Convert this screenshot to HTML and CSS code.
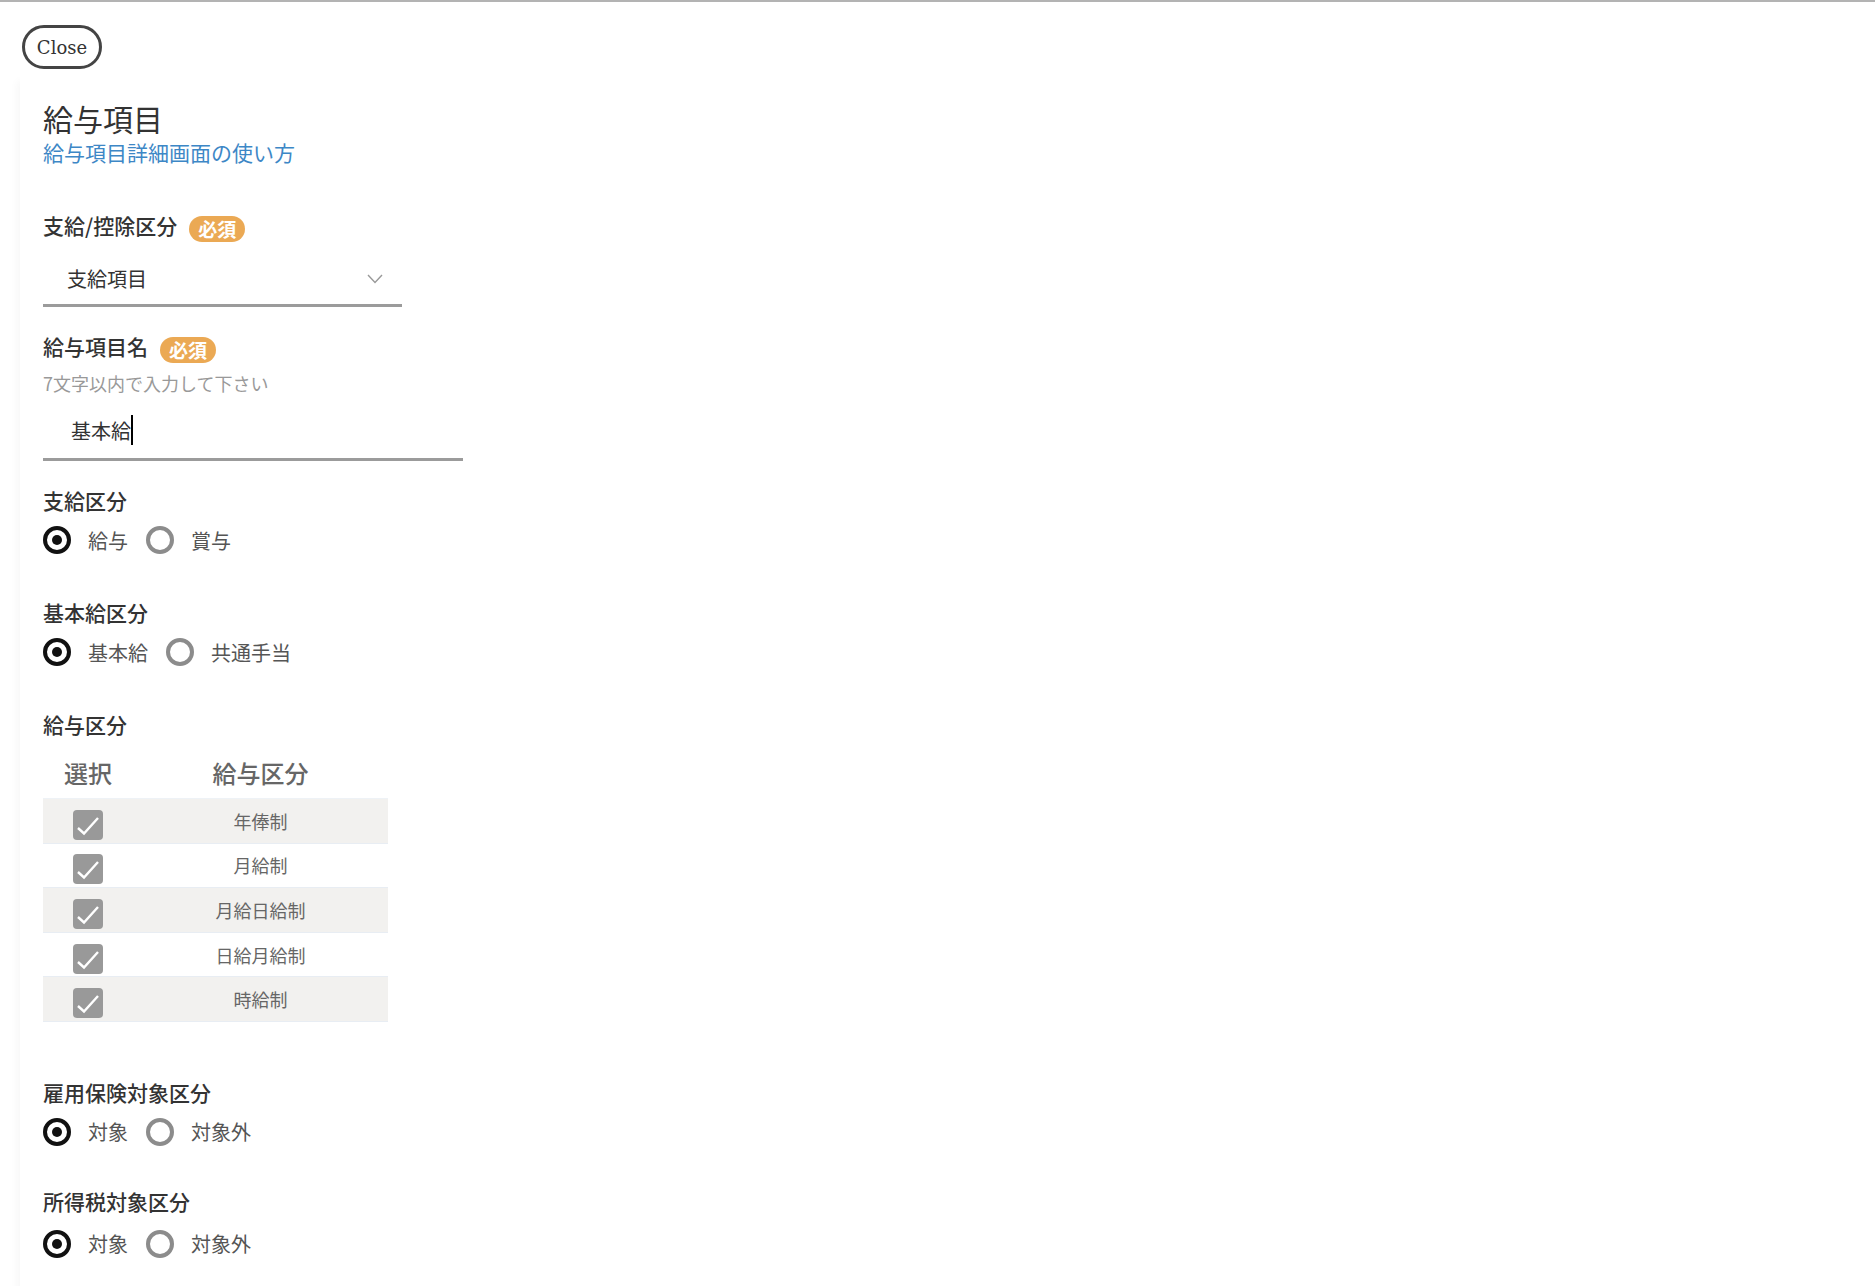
FILE: index.html
```
<!DOCTYPE html>
<html>

<head>
    <title>給与項目</title>
    <meta name="viewport" content="width=device-width, initial-scale=1.0">
    <link rel="stylesheet" href="styles.css">
</head>

<body>

    <button class="close-btn">Close</button>

    <div class="panel">
        <h1 class="title">給与項目</h1>
        <a class="help-link" href="#">給与項目詳細画面の使い方</a>

        <!-- 支給/控除区分 -->
        <div class="field first">
            <div class="label">支給/控除区分 <span class="badge">必須</span></div>
            <div class="select">
                <span>支給項目</span>
                <svg class="chevron" width="16" height="10" viewBox="0 0 16 10">
                    <path d="M1 1 L8 8.5 L15 1" fill="none" stroke="#999" stroke-width="1.4" />
                </svg>
            </div>
        </div>

        <!-- 給与項目名 -->
        <div class="field">
            <div class="label">給与項目名 <span class="badge">必須</span></div>
            <div class="hint">7文字以内で入力して下さい</div>
            <div class="text-input">基本給<span class="caret"></span></div>
        </div>

        <!-- 支給区分 -->
        <div class="field">
            <div class="label">支給区分</div>
            <div class="radios">
                <span class="radio checked"></span><span class="radio-label">給与</span>
                <span class="radio"></span><span class="radio-label">賞与</span>
            </div>
        </div>

        <!-- 基本給区分 -->
        <div class="field gap">
            <div class="label">基本給区分</div>
            <div class="radios">
                <span class="radio checked"></span><span class="radio-label">基本給</span>
                <span class="radio"></span><span class="radio-label">共通手当</span>
            </div>
        </div>

        <!-- 給与区分 -->
        <div class="field gap">
            <div class="label">給与区分</div>
            <div class="pay-table">
                <div class="head">
                    <div class="col-check">選択</div>
                    <div class="col-name">給与区分</div>
                </div>
                <div class="row">
                    <div class="col-check"><span class="checkbox"></span></div>
                    <div class="col-name">年俸制</div>
                </div>
                <div class="row">
                    <div class="col-check"><span class="checkbox"></span></div>
                    <div class="col-name">月給制</div>
                </div>
                <div class="row">
                    <div class="col-check"><span class="checkbox"></span></div>
                    <div class="col-name">月給日給制</div>
                </div>
                <div class="row">
                    <div class="col-check"><span class="checkbox"></span></div>
                    <div class="col-name">日給月給制</div>
                </div>
                <div class="row">
                    <div class="col-check"><span class="checkbox"></span></div>
                    <div class="col-name">時給制</div>
                </div>
            </div>
        </div>

        <!-- 雇用保険対象区分 -->
        <div class="field after-table">
            <div class="label">雇用保険対象区分</div>
            <div class="radios">
                <span class="radio checked"></span><span class="radio-label">対象</span>
                <span class="radio"></span><span class="radio-label">対象外</span>
            </div>
        </div>

        <!-- 所得税対象区分 -->
        <div class="field gap last">
            <div class="label">所得税対象区分</div>
            <div class="radios">
                <span class="radio checked"></span><span class="radio-label">対象</span>
                <span class="radio"></span><span class="radio-label">対象外</span>
            </div>
        </div>
    </div>

</body>

</html>
```

FILE: styles.css
```
body {
    margin: 0;
    border-top: 2px solid #b3b3b3;
    font-family: "DejaVu Serif", "Noto Sans CJK JP", serif;
    color: #333;
    background: white;
    height: 1284px;
    overflow: hidden;
}

.close-btn {
    display: block;
    margin: 23px 0 0 22px;
    width: 80px;
    height: 44px;
    border: 3px solid #444;
    border-radius: 22px;
    background: white;
    font-family: "DejaVu Serif", serif;
    font-size: 18px;
    color: #333;
    padding: 0;
}

.panel {
    margin: 4px 0 0 20px;
    padding: 27px 23px 60px;
    box-shadow: -5px 6px 8px -2px rgba(0, 0, 0, 0.035);
    font-family: "Noto Sans CJK JP", sans-serif;
}

.title {
    margin: 0;
    font-size: 30px;
    line-height: 36px;
    font-weight: normal;
    color: #333;
}

.help-link {
    display: block;
    margin-top: 2px;
    font-size: 21px;
    line-height: 28px;
    color: #3d87c6;
    text-decoration: none;
}

.field {
    margin-top: 25px;
}

.field.first {
    margin-top: 45px;
}

.field.gap {
    margin-top: 44px;
}

.field.after-table {
    margin-top: 56px;
}

.field.last {
    margin-top: 41px;
}

.field.last .radios {
    margin-top: 15px;
}

.label {
    display: flex;
    align-items: center;
    height: 28px;
    font-size: 21px;
    line-height: 28px;
    font-weight: 500;
    color: #333;
}

.badge {
    margin: 8px 0 0 12px;
    padding: 0 9px;
    height: 26px;
    line-height: 26px;
    border-radius: 13px;
    background: #eba954;
    color: white;
    font-size: 19px;
    font-weight: bold;
}

.select {
    margin-top: 14px;
    width: 359px;
    height: 54px;
    box-sizing: border-box;
    border-bottom: 3px solid #9b9b9b;
    padding: 0 19px 0 24px;
    display: flex;
    align-items: center;
    justify-content: space-between;
    font-size: 20px;
    color: #333;
}

.hint {
    margin-top: 11px;
    font-size: 18px;
    line-height: 24px;
    color: #999;
}

.text-input {
    margin-top: 3px;
    width: 420px;
    height: 63px;
    box-sizing: border-box;
    border-bottom: 3px solid #9b9b9b;
    padding: 4px 0 0 28px;
    display: flex;
    align-items: center;
    font-size: 20px;
    color: #333;
}

.caret {
    display: inline-block;
    width: 2px;
    height: 30px;
    background: black;
}

.radios {
    margin-top: 12px;
    display: flex;
    align-items: center;
    height: 28px;
}

.radio {
    width: 28px;
    height: 28px;
    box-sizing: border-box;
    border: 4px solid #8c8c8c;
    border-radius: 50%;
    display: flex;
    align-items: center;
    justify-content: center;
}

.radio.checked {
    border-color: #111;
}

.radio.checked::after {
    content: "";
    width: 10px;
    height: 10px;
    border-radius: 50%;
    background: #111;
}

.radio-label {
    margin: 0 18px 0 17px;
    font-size: 20px;
    color: #555;
}

.pay-table {
    margin-top: 8px;
    width: 345px;
}

.pay-table .head,
.pay-table .row {
    display: grid;
    grid-template-columns: 90px 1fr;
    align-items: center;
    text-align: center;
}

.pay-table .head {
    height: 52px;
    font-size: 24px;
    font-weight: 500;
    color: #666;
    border-bottom: 1px solid #eef2f6;
}

.pay-table .row {
    height: 44.6px;
    box-sizing: border-box;
    border-bottom: 1px solid #e8edf3;
    font-size: 18px;
    color: #666;
}

.pay-table .row:nth-child(even) {
    background: #f2f1ef;
}

.col-check {
    display: flex;
    justify-content: center;
}

.row .col-check {
    padding-top: 8px;
}

.checkbox {
    width: 30px;
    height: 30px;
    border-radius: 4px;
    background: #999 url("data:image/svg+xml,%3Csvg xmlns='http://www.w3.org/2000/svg' width='30' height='30'%3E%3Cpath d='M5 18 L11 23.5 L25 8' fill='none' stroke='white' stroke-width='2.4'/%3E%3C/svg%3E") no-repeat center;
}
```
